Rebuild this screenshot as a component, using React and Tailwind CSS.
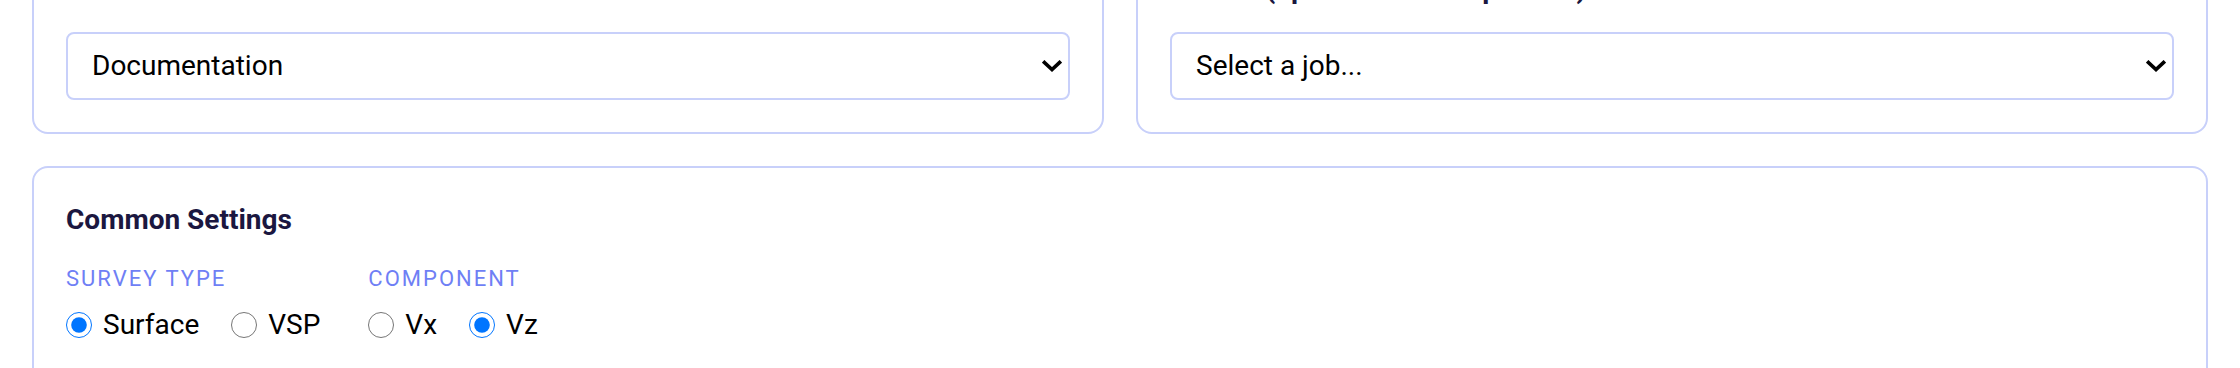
import React from "react";

function Chevron() {
  return (
    <svg
      className="pointer-events-none absolute right-[8px] top-1/2 -translate-y-1/2"
      width="20"
      height="12"
      viewBox="0 0 20 12"
      fill="none"
    >
      <path d="M2.5 2.5 L10 9.5 L17.5 2.5" stroke="#000" strokeWidth="3.6" strokeLinecap="square" strokeLinejoin="miter" />
    </svg>
  );
}

function SelectCard({ label, value, options }) {
  return (
    <div className="rounded-2xl border-2 border-[#c8d0fa] bg-white p-8">
      <div className="mb-[23px] text-[28px] leading-[40px] font-bold text-[#1b1740] whitespace-nowrap">{label}</div>
      <div className="relative">
        <select
          defaultValue={value}
          className="block h-[68px] w-full appearance-none rounded-[8px] border-2 border-[#c8d0fa] bg-white pl-6 pr-12 text-[28px] text-black outline-none"
        >
          {options.map((o) => (
            <option key={o.value} value={o.value}>
              {o.label}
            </option>
          ))}
        </select>
        <Chevron />
      </div>
    </div>
  );
}

function RadioGroup({ title, name, options, checked }) {
  return (
    <div className="flex flex-col">
      <div className="text-[22px] leading-[30px] uppercase tracking-[2px] text-[#6f7ff5]">{title}</div>
      <div className="mt-[11px] flex items-center gap-8">
        {options.map((o) => (
          <label key={o} className="flex items-center gap-[11px] text-[28px] leading-[40px] text-black">
            <input
              type="radio"
              name={name}
              defaultChecked={o === checked}
              className="m-0 h-[26px] w-[26px] accent-[#0075ff]"
            />
            {o}
          </label>
        ))}
      </div>
    </div>
  );
}

const modes = [
  { value: "docs", label: "Documentation" },
  { value: "processing", label: "Processing" },
  { value: "inversion", label: "Inversion" },
];

const jobs = [
  { value: "", label: "Select a job..." },
  { value: "job-1", label: "Job 1" },
  { value: "job-2", label: "Job 2" },
];

export default function App() {
  return (
    <div className="h-[368px] w-full overflow-hidden bg-white" style={{ fontFamily: "Roboto, 'Liberation Sans', sans-serif" }}>
      <div className="-mt-[65px] flex flex-col gap-8 px-8">
        <div className="grid grid-cols-2 gap-8">
          <SelectCard label="Mode" value="docs" options={modes} />
          <SelectCard label="Source (optional for comparison)" value="" options={jobs} />
        </div>

        {/* Common settings */}
        <div className="rounded-2xl border-2 border-[#c8d0fa] bg-white p-8">
          <h3 className="mb-6 text-[28px] leading-[40px] font-bold text-[#1b1740]">Common Settings</h3>
          <div className="flex gap-12">
            <RadioGroup title="Survey Type" name="survey" options={["Surface", "VSP"]} checked="Surface" />
            <RadioGroup title="Component" name="component" options={["Vx", "Vz"]} checked="Vz" />
          </div>
          <div className="h-10" />
        </div>
      </div>
    </div>
  );
}
